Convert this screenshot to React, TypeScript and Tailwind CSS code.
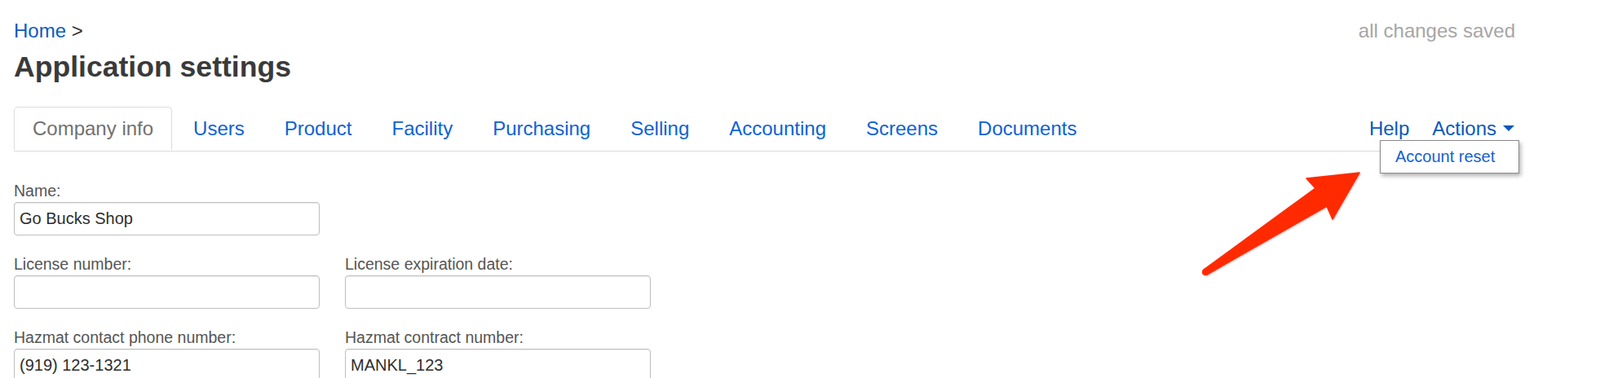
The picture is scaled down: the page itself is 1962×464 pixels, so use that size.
import React from 'react';

const tabs = ['Users', 'Product', 'Facility', 'Purchasing', 'Selling', 'Accounting', 'Screens', 'Documents'];

function Field({ label, value }: { label: string; value?: string }) {
  return (
    <div className="mb-[23px]">
      <label className="block text-[19.5px] leading-[24px] text-[#555]">{label}</label>
      <input
        readOnly
        defaultValue={value ?? ''}
        className="mt-[2px] block h-[41px] w-[375px] rounded-[4px] border border-[#bfbfbf] bg-white px-[6px] text-[20px] text-[#2e2e2e] shadow-[inset_0_1px_1px_rgba(0,0,0,0.08)] outline-none"
        style={{ fontFamily: '"Liberation Sans", Arial, sans-serif' }}
      />
    </div>
  );
}

export default function App() {
  return (
    <div
      className="relative h-[464px] w-[1962px] overflow-hidden bg-white"
      style={{ fontFamily: '"Liberation Sans", Arial, sans-serif' }}
    >
      <div className="ml-[17px] w-[1845px] pt-[21px]">
        {/* Breadcrumb + save status */}
        <div className="flex justify-between pr-[4px] text-[24px] leading-[34px]">
          <div>
            <a className="text-[#0a5bbd]">Home</a>
            <span className="text-[#333]"> &gt;</span>
          </div>
          <div className="text-[#a6a6a6]">all changes saved</div>
        </div>

        <h1 className="mt-[7px] text-[35.6px] font-bold leading-[40px] text-[#3a3a3a]">Application settings</h1>

        {/* Tabs */}
        <div className="relative mt-[29px] flex items-start justify-between border-b border-[#dcdcdc]">
          <div className="flex gap-[3px] text-[24px] leading-[34px]">
            <div className="rounded-t-[5px] border border-b-0 border-[#dcdcdc] px-[22px] py-[9px] text-[#717171]">
              Company info
            </div>
            {tabs.map((t) => (
              <div key={t} className="border border-b-0 border-transparent px-[22px] py-[9px] text-[#0c63d4]">
                {t}
              </div>
            ))}
          </div>

          <div className="flex items-center gap-[28px] py-[10px] pr-[5px] text-[24px] leading-[34px] text-[#0a58bb]">
            <span>Help</span>
            <span className="flex items-center">
              Actions
              <svg className="ml-[8px]" width="14" height="8" viewBox="0 0 14 8">
                <polygon points="0,0 14,0 7,7" fill="#0a58bb" />
              </svg>
            </span>
          </div>

          {/* Open dropdown */}
          <div className="absolute right-[-1px] top-[41px] z-10 h-[41px] w-[171px] border border-[#8a8a8a] bg-white pl-[18px] text-[20px] leading-[39px] text-[#155fd0] shadow-[2px_3px_5px_rgba(0,0,0,0.3)]">
            Account reset
          </div>
        </div>

        {/* Company info form */}
        <div className="mt-[36px] grid grid-cols-[375px_375px] gap-x-[31px]">
          <Field label="Name:" value="Go Bucks Shop" />
          <div />
          <Field label="License number:" />
          <Field label="License expiration date:" />
          <Field label="Hazmat contact phone number:" value="(919) 123-1321" />
          <Field label="Hazmat contract number:" value="MANKL_123" />
        </div>
      </div>

      {/* Annotation arrow */}
      <svg
        className="absolute left-[1460px] top-[200px]"
        width="240"
        height="150"
        viewBox="0 0 240 150"
        style={{ filter: 'drop-shadow(1px 1px 1px rgba(0,0,0,0.25))' }}
      >
        <polygon
          points="16,131 153,31 142,19 207,12 174,69 167,53 20,137"
          fill="#ff2a00"
          stroke="#ff2a00"
          strokeWidth="1.5"
          strokeLinejoin="round"
        />
        <circle cx="18" cy="134" r="4" fill="#ff2a00" />
      </svg>
    </div>
  );
}
